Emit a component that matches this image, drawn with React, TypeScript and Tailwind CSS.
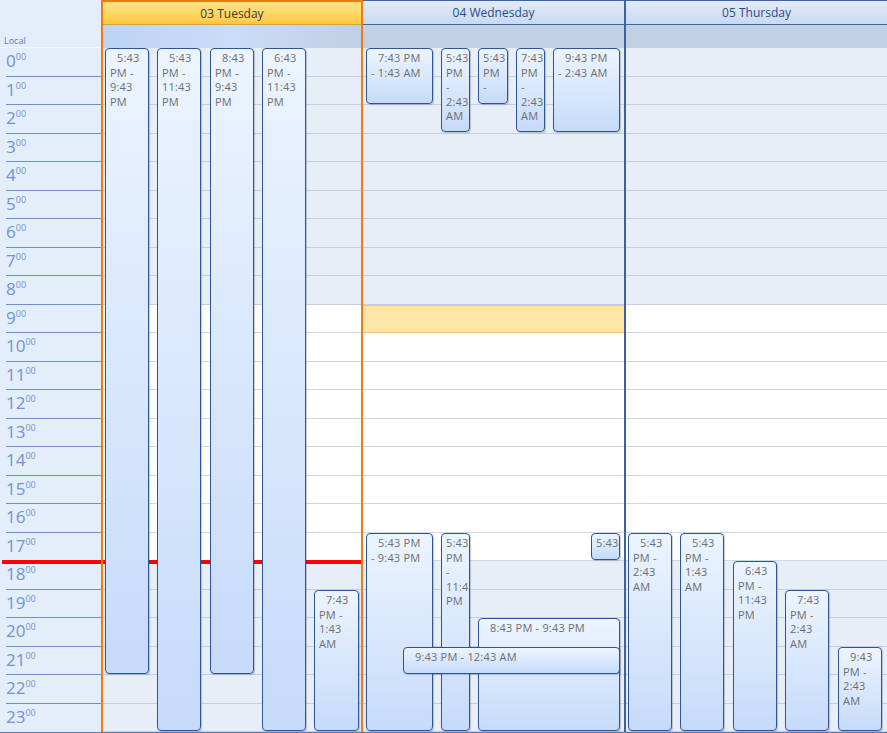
import React from "react";

type CalEvent = {
  x: number;
  y: number;
  w: number;
  h: number;
  text: string;
};

type Day = {
  label: string;
  today?: boolean;
  selectedHour?: number;
  events: CalEvent[];
};

const LINE = 14.5;
const hours = Array.from({ length: 24 }, (_, i) => i);
const isWork = (h: number) => h >= 9 && h <= 17;

const days: Day[] = [
  {
    label: "03 Tuesday",
    today: true,
    events: [
      { x: 2, y: 0, w: 44, h: 626, text: "5:43 PM - 9:43 PM" },
      { x: 54, y: 0, w: 44, h: 683, text: "5:43 PM - 11:43 PM" },
      { x: 107, y: 0, w: 44, h: 626, text: "8:43 PM - 9:43 PM" },
      { x: 159, y: 0, w: 44, h: 683, text: "6:43 PM - 11:43 PM" },
      { x: 211, y: 542, w: 45, h: 141, text: "7:43 PM - 1:43 AM" },
    ],
  },
  {
    label: "04 Wednesday",
    selectedHour: 9,
    events: [
      { x: 3, y: 0, w: 67, h: 56, text: "7:43 PM - 1:43 AM" },
      { x: 78, y: 0, w: 29, h: 84, text: "5:43 PM - 2:43 AM" },
      { x: 115, y: 0, w: 30, h: 56, text: "5:43 PM - 1:43 AM" },
      { x: 153, y: 0, w: 29, h: 84, text: "7:43 PM - 2:43 AM" },
      { x: 190, y: 0, w: 67, h: 84, text: "9:43 PM - 2:43 AM" },
      { x: 3, y: 485, w: 67, h: 198, text: "5:43 PM - 9:43 PM" },
      { x: 78, y: 485, w: 29, h: 198, text: "5:43 PM - 11:43 PM" },
      { x: 228, y: 485, w: 29, h: 27, text: "5:43 PM - 6:43 PM" },
      { x: 115, y: 570, w: 142, h: 113, text: "8:43 PM - 9:43 PM" },
      { x: 40, y: 599, w: 217, h: 27, text: "9:43 PM - 12:43 AM" },
    ],
  },
  {
    label: "05 Thursday",
    events: [
      { x: 2, y: 485, w: 44, h: 198, text: "5:43 PM - 2:43 AM" },
      { x: 54, y: 485, w: 44, h: 198, text: "5:43 PM - 1:43 AM" },
      { x: 107, y: 513, w: 44, h: 170, text: "6:43 PM - 11:43 PM" },
      { x: 159, y: 542, w: 44, h: 141, text: "7:43 PM - 2:43 AM" },
      { x: 212, y: 599, w: 44, h: 84, text: "9:43 PM - 2:43 AM" },
    ],
  },
];

function Appointment({ ev }: { ev: CalEvent }) {
  // only whole lines are shown; words may run into the right padding
  const textH = Math.floor((ev.h - 4) / LINE) * LINE;
  return (
    <div
      className="absolute rounded-[4px] border border-[#2d5596] bg-linear-to-b from-[#ecf4ff] to-[#c6dbf9] shadow-[1px_1px_1px_rgba(40,60,100,0.25)] overflow-hidden pl-[4px] pr-[6px] pt-[2px]"
      style={{ left: ev.x, top: ev.y, width: ev.w, height: ev.h }}
    >
      <div
        className="[clip-path:inset(0_-30px_0_-10px)] text-[11px] leading-[14.5px] tracking-[0.2px] text-[#6e6e6e]"
        style={{ height: textH, textIndent: ev.w >= 40 ? 7 : 0 }}
      >
        {ev.text}
      </div>
    </div>
  );
}

function Ruler() {
  return (
    <div className="w-[101px] shrink-0 flex flex-col bg-[#e4edfa]">
      <div className="h-[48px] flex items-end pl-[4px] border-b border-[#f3f7fd]">
        <span className="text-[9px] leading-[12px] text-[#5b7dbd]">Local</span>
      </div>
      <div className="relative h-[684px] grid grid-rows-[repeat(24,minmax(0,1fr))]">
        {hours.map((h) => (
          <div
            key={h}
            className={`ml-[6px] flex items-start pt-[3px] text-[#7094d4] ${h < 23 ? "border-b border-[#7090c6]" : ""}`}
          >
            <span className="text-[17px] leading-[19px]">{h}</span>
            <span className="text-[9px] leading-[10px] mt-[1px]">00</span>
          </div>
        ))}
        <div className="absolute left-[2px] right-0 top-[512px] h-[4px] bg-[#ff0000]" />
      </div>
    </div>
  );
}

function DayColumn({ day, className }: { day: Day; className: string }) {
  return (
    <div className={`flex flex-col ${className}`}>
      {day.today ? (
        <div className="h-[25px] border-t-2 border-b border-t-[#f07c10] border-b-[#e0a040] bg-linear-to-b from-[#ffe48a] to-[#ffc93a] flex items-center justify-center pt-[1px] text-[12px] text-[#3a3a3a]">
          {day.label}
        </div>
      ) : (
        <div className="h-[25px] border-t border-b border-[#3f62a2] bg-linear-to-b from-[#e2ebfa] to-[#c9d9f1] flex items-center justify-center pt-[1px] text-[12px] text-[#2b4a8a]">
          {day.label}
        </div>
      )}
      {day.today ? (
        <div className="h-[23px] bg-linear-to-r from-[#bcd4f4] via-[#cadcf6] to-[#c1cfe5]" />
      ) : (
        <div className="h-[23px] bg-[#c1cfe3]" />
      )}
      <div className="relative h-[684px] grid grid-rows-[repeat(24,minmax(0,1fr))]">
        {hours.map((h) => {
          const selected = day.selectedHour === h;
          let cell = isWork(h)
            ? "bg-white border-b border-[#d2d6e2]"
            : "bg-[#e8eef8] border-b border-[#c7cee1]";
          if (selected) cell = "bg-[#ffe6a8] border-b border-[#f5c37c] shadow-[inset_0_1px_0_#f5c37c]";
          return <div key={h} className={cell} />;
        })}
        {day.today && <div className="absolute left-0 right-0 top-[512px] h-[4px] bg-[#ff0000]" />}
        {day.events.map((ev, i) => (
          <Appointment key={i} ev={ev} />
        ))}
      </div>
    </div>
  );
}

export default function App() {
  return (
    <div className="w-[887px] h-[733px] flex overflow-hidden bg-white border-b border-[#5b7db6] font-['Open_Sans','Noto_Sans',sans-serif]">
      <Ruler />
      <DayColumn day={days[0]} className="w-[262px] shrink-0 border-x-2 border-[#f07c10]" />
      <DayColumn day={days[1]} className="w-[263px] shrink-0 border-r-2 border-[#3d62a4]" />
      <DayColumn day={days[2]} className="flex-1" />
    </div>
  );
}
